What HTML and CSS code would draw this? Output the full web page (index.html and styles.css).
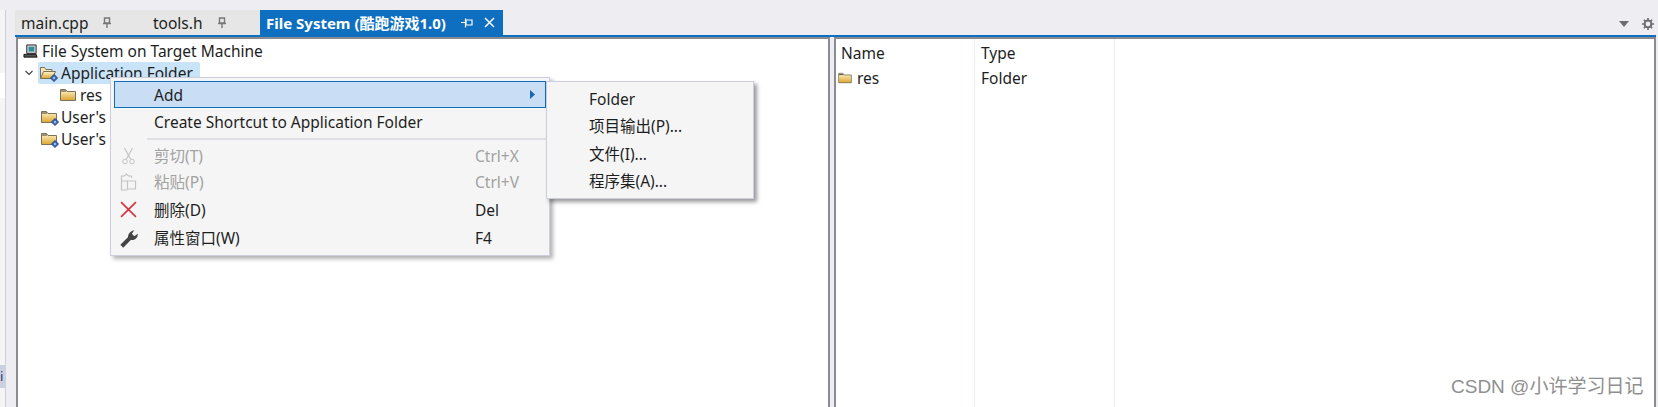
FILE: index.html
```html
<!DOCTYPE html>
<html lang="zh">
<head>
<meta charset="utf-8">
<title>File System</title>
<link rel="stylesheet" href="styles.css">
</head>
<body>
<svg class="defs" width="0" height="0">
  <defs>
    <linearGradient id="fg" x1="0" y1="0" x2="0" y2="1"><stop offset="0" stop-color="#fff6cf"/><stop offset="1" stop-color="#dca52e"/></linearGradient>
    <symbol id="folder" viewBox="0 0 16 14">
      <path d="M.5 12.500V1.500h5l1.500 2h8.500v9z" fill="url(#fg)" stroke="#7a7258"/>
      <path d="M1 3h5" stroke="#3f3a2a"/>
    </symbol>
    <symbol id="folder-open" viewBox="0 0 16 14">
      <path d="M.5 12.500V1.500h4l1.500 2h6v2" fill="#f3e6b8" stroke="#7a7258"/>
      <path d="M.5 12.500 3.500 5.500h12l-3 7z" fill="url(#fg)" stroke="#7a7258"/>
    </symbol>
    <symbol id="badge" viewBox="0 0 8 8">
      <path d="M4 .5 7.500 4 4 7.500 .5 4z" fill="#3f6fc0" stroke="#1f3f80"/><path d="M3 4h2" stroke="#fff"/>
    </symbol>
  </defs>
</svg>
<div class="app">
  <div class="rail"><div class="rail-box"></div><div class="rail-sel">i</div></div>
  <div class="main">
    <div class="tabs">
      <div class="tab tab-main">main.cpp<svg class="pin" viewBox="0 0 10 12"><path d="M2.500 1h5v5h-5zM1 6.500h8M5 7v4" fill="none" stroke="#777" stroke-width="1.400"/></svg></div>
      <div class="tab tab-tools">tools.h<svg class="pin" viewBox="0 0 10 12"><path d="M2.500 1h5v5h-5zM1 6.500h8M5 7v4" fill="none" stroke="#777" stroke-width="1.400"/></svg></div>
      <div class="tab tab-active"><span class="tab-label">File System (酷跑游戏1.0)</span>
        <svg class="pin-h" viewBox="0 0 12 10"><path d="M5 2h6v5H5zM4.500 .5v9M0 4.500h4" fill="none" stroke="#fff" stroke-width="1.200"/></svg>
        <svg class="close" viewBox="0 0 11 11"><path d="M1 1l9 9M10 1l-9 9" stroke="#fff" stroke-width="1.500"/></svg>
      </div>
      <div class="tab-tools-right">
        <svg class="drop" viewBox="0 0 10 6"><path d="M0 0h10L5 6z" fill="#6d6d70"/></svg>
        <svg class="gear" viewBox="0 0 12 12"><circle cx="6" cy="6" r="3.400" fill="none" stroke="#6d6d70" stroke-width="2"/><path d="M6 0v2.500M6 9.500V12M0 6h2.500M9.500 6H12M1.800 1.800l1.800 1.800M8.400 8.400l1.800 1.800M10.200 1.800 8.400 3.600M3.600 8.400l-1.800 1.800" stroke="#6d6d70" stroke-width="1.600"/></svg>
      </div>
    </div>
    <div class="panes">
      <div class="pane pane-left">
        <div class="row row-root">
          <svg class="ico-pc" viewBox="0 0 16 16"><path d="M4 1h10v9H4z" fill="#cfcfcf" stroke="#222"/><path d="M6 3h6v5H6z" fill="#2a8f99"/><path d="M1 11h13l1 3H1z" fill="#555" stroke="#111"/></svg>
          <span>File System on Target Machine</span>
        </div>
        <div class="row row-app">
          <svg class="chev" viewBox="0 0 8 6"><path d="M.5 1 4 4.500 7.500 1" fill="none" stroke="#444" stroke-width="1.200"/></svg>
          <span class="sel">
            <span class="fi"><svg class="f16" viewBox="0 0 16 14"><use href="#folder-open"/></svg><svg class="bdg"><use href="#badge"/></svg></span>
            <span>Application Folder</span>
          </span>
        </div>
        <div class="row row-res"><svg class="f16" viewBox="0 0 16 14"><use href="#folder"/></svg><span>res</span></div>
        <div class="row row-user"><span class="fi"><svg class="f16" viewBox="0 0 16 14"><use href="#folder"/></svg><svg class="bdg"><use href="#badge"/></svg></span><span>User's</span></div>
        <div class="row row-user"><span class="fi"><svg class="f16" viewBox="0 0 16 14"><use href="#folder"/></svg><svg class="bdg"><use href="#badge"/></svg></span><span>User's</span></div>
      </div>
      <div class="pane pane-right">
        <div class="col col-name">
          <div class="head">Name</div>
          <div class="cell cell-res"><svg class="f13" viewBox="0 0 16 14"><use href="#folder"/></svg>res</div>
        </div>
        <div class="col col-type">
          <div class="head">Type</div>
          <div class="cell">Folder</div>
        </div>
      </div>
    </div>
  </div>
</div>

<div class="menu menu-main">
  <div class="mi mi-hot"><span class="mi-text">Add</span><svg class="arrow" viewBox="0 0 5 9"><path d="M0 0l5 4.500L0 9z" fill="#1468b4"/></svg></div>
  <div class="mi mi-plain"><span class="mi-text">Create Shortcut to Application Folder</span></div>
  <div class="sep"></div>
  <div class="mi mi-off">
    <svg class="mi-ico" viewBox="0 0 16 18"><path d="M4 1l6 11M12 1 6 12" fill="none" stroke="#c4c4c4" stroke-width="1.200"/><circle cx="4.500" cy="14.500" r="2.300" fill="none" stroke="#c4c4c4"/><circle cx="11.500" cy="14.500" r="2.300" fill="none" stroke="#c4c4c4"/></svg>
    <span class="mi-text">剪切(T)</span><span class="mi-key">Ctrl+X</span></div>
  <div class="mi mi-off">
    <svg class="mi-ico" viewBox="0 0 16 18"><path d="M7 8H1V3h3l2-2 2 2h3v2M7 17H1V8M7 8h8v8H7z" fill="none" stroke="#c4c4c4" stroke-width="1.200"/></svg>
    <span class="mi-text">粘贴(P)</span><span class="mi-key">Ctrl+V</span></div>
  <div class="mi mi-del">
    <svg class="mi-ico" viewBox="0 0 16 16"><path d="M1 1l14 14M15 1 1 15" stroke="#d9303f" stroke-width="1.500"/></svg>
    <span class="mi-text">删除(D)</span><span class="mi-key">Del</span></div>
  <div class="mi mi-prop">
    <svg class="mi-ico" viewBox="0 0 16 16"><path d="M1.500 14.500l7-7" stroke="#444" stroke-width="3.400"/><path d="M7 8c-1-3 1-6 5-7l-2 3 2 2 3-2c0 4-3 6-6 5z" fill="#444"/></svg>
    <span class="mi-text">属性窗口(W)</span><span class="mi-key">F4</span></div>
</div>

<div class="menu menu-sub">
  <div class="si si-a">Folder</div>
  <div class="si si-b">项目输出(P)...</div>
  <div class="si si-c">文件(I)...</div>
  <div class="si si-d">程序集(A)...</div>
</div>

<div class="mark">CSDN @小许学习日记</div>
</body>
</html>
```

FILE: styles.css
```css
html, body { margin: 0; padding: 0; }
body {
  width: 1658px; height: 407px; overflow: hidden; position: relative;
  background: #eeeef2; color: #1e1e1e;
  font: 15.5px/20px "Noto Sans", "Noto Sans CJK SC", sans-serif;
}
.defs { position: absolute; }
.app { display: flex; height: 407px; }
.rail { width: 5px; background: #f5f5f5; border-right: 1px solid #cfcfe0; display: flex; flex-direction: column; margin-top: 10px; overflow: hidden; }
.rail-box { height: 25px; margin-top: 63px; background: #fff; }
.rail-sel { margin-top: 267px; height: 23px; background: #cdd0e0; color: #1e3a70; font-size: 13px; line-height: 23px; }
.main { flex: 1; margin-left: 9px; margin-right: 2px; display: flex; flex-direction: column; min-width: 0; }

.tabs { height: 25px; margin-top: 10px; display: flex; border-bottom: 2px solid #0e6fc0; }
.tab { display: flex; align-items: center; height: 25px; box-sizing: border-box; }
.tab-main { width: 131px; padding-left: 6px; background: #e6e6e6; }
.tab-tools { width: 114px; padding-left: 7px; background: #e6e6e6; }
.pin { width: 10px; height: 12px; margin-left: 14px; }
.tab-active { width: 243px; padding-left: 6px; background: #0e6fc0; color: #fff; font-weight: 700; font-size: 15px; white-space: nowrap; }
.pin-h { width: 12px; height: 10px; margin-left: 15px; flex: none; }
.close { width: 11px; height: 11px; margin-left: 11px; flex: none; }
.tab-tools-right { margin-left: auto; display: flex; align-items: center; padding-right: 2px; padding-top: 2px; }
.drop { width: 10px; height: 6px; margin-right: 13px; }
.gear { width: 12px; height: 12px; }

.panes { flex: 1; display: flex; gap: 4px; min-height: 0; padding-left: 1px; }
.pane { border: 2px solid #8a8a8f; border-bottom: 0; background: #fff; box-sizing: border-box; }
.pane-left { width: 814px; padding-top: 1px; }
.pane-right { flex: 1; display: flex; }

.row { height: 22px; display: flex; align-items: center; white-space: nowrap; }
.row-root { padding-left: 5px; gap: 4px; }
.ico-pc { width: 15px; height: 15px; }
.row-app { padding-left: 7px; }
.chev { width: 8px; height: 6px; }
.sel { display: flex; align-items: center; background: #c9e3f9; height: 22px; margin-left: 5px; padding-left: 2px; border-radius: 2px; gap: 5px; width: 162px; box-sizing: border-box; }
.fi { position: relative; display: inline-flex; }
.f16 { width: 16px; height: 14px; }
.f13 { width: 14px; height: 12px; margin: 0 5px 0 -3px; }
.bdg { position: absolute; right: -2px; bottom: -2px; width: 8px; height: 8px; }
.row-res { padding-left: 42px; gap: 4px; }
.row-user { padding-left: 23px; gap: 4px; }

.col { box-sizing: border-box; height: 100%; border-right: 1px solid #e8eff7; }
.col-name { width: 139px; padding-left: 5px; }
.col-type { width: 140px; padding-left: 6px; }
.head { height: 28px; padding-top: 3px; box-sizing: border-box; line-height: 22px; }
.cell { height: 22px; line-height: 22px; }
.cell-res { display: flex; align-items: center; }

.menu { position: absolute; background: #f5f5f5; border: 1px solid #cccedb; box-sizing: border-box; box-shadow: 3px 3px 4px rgba(0,0,0,.3); }
.menu-main { left: 110px; top: 77px; width: 440px; height: 179px; padding: 3px 0 0 3px; }
.menu-sub { left: 546px; top: 81px; width: 208px; height: 118px; padding-top: 4px; box-shadow: 3px 3px 4px rgba(0,0,0,.4); z-index: 2; }
.mi { position: relative; height: 26px; display: flex; align-items: center; padding-left: 40px; }
.mi-hot { height: 27px; background: #c9ddf4; border: 1px solid #0e6fc0; box-sizing: border-box; margin-right: 3px; padding-left: 39px; }
.mi-plain { height: 28px; }
.sep { height: 2px; background: #e0e0e4; margin: 2px 0 3px 33px; }
.mi-off { color: #a2a2a2; }
.mi-del { height: 28px; margin-top: 1px; }
.mi-prop { height: 28px; }
.mi-key { position: absolute; left: 361px; }
.mi-ico { position: absolute; left: 6px; top: 4px; width: 17px; height: 18px; }
.mi-del .mi-ico { top: 5px; width: 17px; height: 17px; }
.mi-prop .mi-ico { top: 5px; width: 19px; height: 19px; }
.arrow { position: absolute; right: 10px; top: 8px; width: 5px; height: 9px; }
.si { height: 26px; line-height: 26px; padding-left: 42px; }
.si-a { height: 27px; }
.si-b { height: 28px; }
.si-c { height: 27px; }
.mark { position: absolute; left: 1451px; top: 376px; font: 19px/22px "Liberation Sans", "Noto Sans CJK SC", sans-serif; color: #8f8f8f; z-index: 3; }
```
